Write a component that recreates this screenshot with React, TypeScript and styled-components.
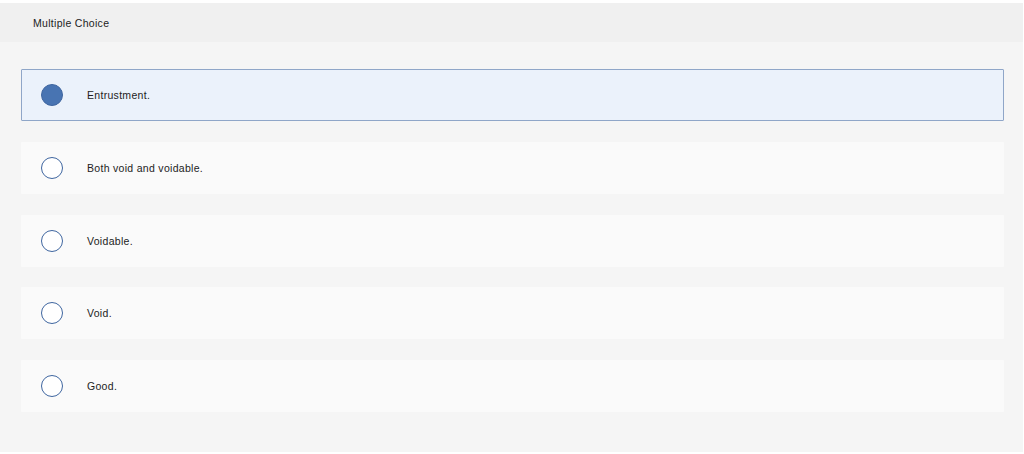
import React, { FC, useState } from 'react';
import styled, { createGlobalStyle } from 'styled-components';

const GlobalStyle = createGlobalStyle`
  body {
    margin: 0;
    background: #fff;
    font-family: 'Liberation Sans', Arial, sans-serif;
  }
`;

const StyledPage = styled.div`
  padding-top: 3px;
  padding-right: 1px;
  background: #fff;
`;

const StyledPanel = styled.div`
  background: #f5f5f5;
  padding-bottom: 40px;
`;

const StyledHeader = styled.div`
  display: flex;
  align-items: center;
  height: 39px;
  padding-left: 33px;
  padding-top: 1px;
  box-sizing: border-box;
  background: #f0f0f0;
  font-size: 10.5px;
  letter-spacing: 0.3px;
  color: #222;
`;

const StyledList = styled.div`
  display: flex;
  flex-direction: column;
  gap: 20.75px;
  padding: 27px 19px 0 21px;
`;

const StyledOption = styled.label<{ $selected: boolean }>`
  display: flex;
  align-items: center;
  height: 52px;
  box-sizing: border-box;
  padding-left: 19px;
  background: ${({ $selected }) => ($selected ? '#ebf2fb' : '#fafafa')};
  border: 1px solid ${({ $selected }) => ($selected ? '#8fa6c8' : 'transparent')};
  border-radius: 1px;
  cursor: pointer;
`;

const StyledRadio = styled.span<{ $selected: boolean }>`
  width: 22px;
  height: 22px;
  box-sizing: border-box;
  border-radius: 50%;
  border: 1px solid #3f66a0;
  background: ${({ $selected }) => ($selected ? '#4874b2' : '#fff')};
  flex-shrink: 0;
`;

const StyledText = styled.span`
  margin-left: 24px;
  font-size: 10.5px;
  letter-spacing: 0.3px;
  color: #222;
`;

const options = ['Entrustment.', 'Both void and voidable.', 'Voidable.', 'Void.', 'Good.'];

const App: FC = () => {
  const [selected, setSelected] = useState(0);

  return (
    <StyledPage>
      <GlobalStyle />
      <StyledPanel>
        <StyledHeader>Multiple Choice</StyledHeader>
        <StyledList>
          {options.map((text, i) => (
            <StyledOption key={text} $selected={selected === i} onClick={() => setSelected(i)}>
              <StyledRadio $selected={selected === i} />
              <StyledText>{text}</StyledText>
            </StyledOption>
          ))}
        </StyledList>
      </StyledPanel>
    </StyledPage>
  );
};

export default App;
